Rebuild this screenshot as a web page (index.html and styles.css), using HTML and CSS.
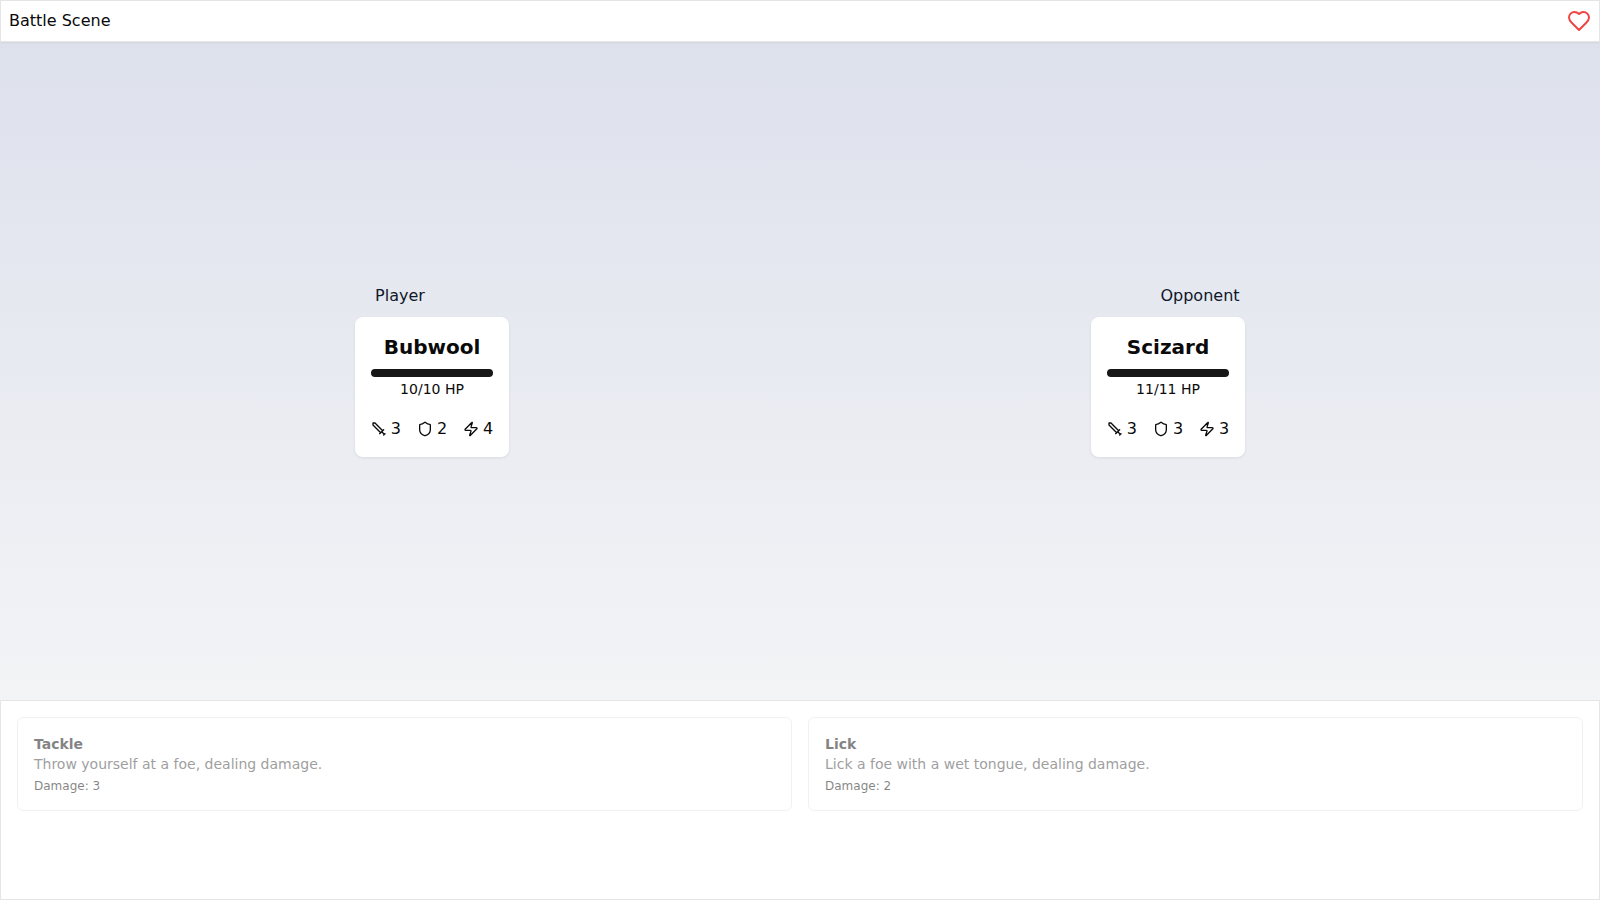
FILE: index.html
```html
<!DOCTYPE html>
<html lang="en">
<head>
<meta charset="utf-8">
<title>Battle Scene</title>
<link rel="stylesheet" href="styles.css">
</head>
<body>
<svg class="sprite" aria-hidden="true">
  <symbol id="sword" viewBox="0 0 24 24"><path d="M14.5 17.5 3 6V3h3l11.5 11.5M13 19l6-6M16 16l4 4M19 21l2-2"/></symbol>
  <symbol id="shield" viewBox="0 0 24 24"><path d="M20 13c0 5-3.5 7.5-7.66 8.95a1 1 0 0 1-.67-.01C7.5 20.5 4 18 4 13V6a1 1 0 0 1 1-1c2 0 4.5-1.2 6.24-2.72a1.17 1.17 0 0 1 1.52 0C14.51 3.81 17 5 19 5a1 1 0 0 1 1 1z"/></symbol>
  <symbol id="zap" viewBox="0 0 24 24"><path d="M4 14a1 1 0 0 1-.78-1.63l9.9-10.2a.5.5 0 0 1 .86.46l-1.92 6.02A1 1 0 0 0 13 10h7a1 1 0 0 1 .78 1.63l-9.9 10.2a.5.5 0 0 1-.86-.46l1.92-6.02A1 1 0 0 0 11 14z"/></symbol>
  <symbol id="heart" viewBox="0 0 24 24"><path d="M19 14c1.49-1.46 3-3.21 3-5.5A5.5 5.5 0 0 0 16.5 3c-1.76 0-3 .5-4.5 2-1.5-1.5-2.74-2-4.5-2A5.5 5.5 0 0 0 2 8.5c0 2.3 1.5 4.05 3 5.5l7 7Z"/></symbol>
</svg>
<div class="app">
  <header class="topbar">
    <span>Battle Scene</span>
    <svg class="heart" aria-hidden="true"><use href="#heart"/></svg>
  </header>
  <main class="arena">
    <div class="labels">
      <span>Player</span>
      <span>Opponent</span>
    </div>
    <div class="fighters">
      <section class="card">
        <h2 class="name">Bubwool</h2>
        <div class="bar" role="progressbar" aria-label="HP" aria-valuenow="10" aria-valuemin="0" aria-valuemax="10"><div class="fill" style="width:100%"></div></div>
        <div class="hp">10/10 HP</div>
        <div class="stats">
          <span class="stat"><svg class="icon"><use href="#sword"/></svg>3</span>
          <span class="stat"><svg class="icon"><use href="#shield"/></svg>2</span>
          <span class="stat"><svg class="icon"><use href="#zap"/></svg>4</span>
        </div>
      </section>
      <section class="card">
        <h2 class="name">Scizard</h2>
        <div class="bar" role="progressbar" aria-label="HP" aria-valuenow="11" aria-valuemin="0" aria-valuemax="11"><div class="fill" style="width:100%"></div></div>
        <div class="hp">11/11 HP</div>
        <div class="stats">
          <span class="stat"><svg class="icon"><use href="#sword"/></svg>3</span>
          <span class="stat"><svg class="icon"><use href="#shield"/></svg>3</span>
          <span class="stat"><svg class="icon"><use href="#zap"/></svg>3</span>
        </div>
      </section>
    </div>
  </main>
  <footer class="moves">
    <button class="move" disabled>
      <span class="move-name">Tackle</span>
      <span class="move-text">Throw yourself at a foe, dealing damage.</span>
      <span class="move-damage">Damage: 3</span>
    </button>
    <button class="move" disabled>
      <span class="move-name">Lick</span>
      <span class="move-text">Lick a foe with a wet tongue, dealing damage.</span>
      <span class="move-damage">Damage: 2</span>
    </button>
  </footer>
</div>
</body>
</html>
```
FILE: styles.css
```css
* {
  box-sizing: border-box;
}

body {
  margin: 0;
  font: 16px/24px "DejaVu Sans", sans-serif;
  color: #0a0a0a;
}

.sprite {
  display: none;
}

.app {
  display: flex;
  flex-direction: column;
  min-height: 100vh;
}

.topbar {
  position: relative;
  display: flex;
  align-items: center;
  justify-content: space-between;
  padding: 8px;
  background: #fff;
  border: 1px solid #e5e5e5;
  box-shadow: 0 1px 2px rgba(0, 0, 0, 0.05);
}

.heart,
.icon {
  fill: none;
  stroke: currentColor;
  stroke-width: 2;
  stroke-linecap: round;
  stroke-linejoin: round;
}

.heart {
  width: 24px;
  height: 24px;
  color: #ef4444;
}

.arena {
  flex: 1;
  display: flex;
  flex-direction: column;
  justify-content: center;
  gap: 9px;
  padding-bottom: 1px;
  background: linear-gradient(to bottom, #dde1ec, #f3f4f6);
}

.labels,
.fighters {
  display: grid;
  grid-template-columns: 1fr 1fr;
  justify-items: center;
}

.labels {
  color: #0f172a;
}

.fighters {
  padding: 0 64px;
}

.card {
  padding: 16px;
  background: #fff;
  border-radius: 8px;
  box-shadow: 0 1px 3px rgba(0, 0, 0, 0.08);
  text-align: center;
}

.name {
  margin: 0 0 8px;
  font-size: 20px;
  line-height: 28px;
  font-weight: 700;
}

.bar {
  height: 8px;
  overflow: hidden;
  border-radius: 4px;
  background: #e5e5e5;
}

.fill {
  height: 100%;
  background: #171717;
}

.hp {
  font-size: 14px;
}

.stats {
  display: flex;
  gap: 16px;
  margin-top: 16px;
}

.stat {
  display: flex;
  align-items: center;
  gap: 4px;
}

.icon {
  width: 16px;
  height: 16px;
}

.moves {
  display: grid;
  grid-template-columns: 1fr 1fr;
  align-items: start;
  gap: 16px;
  min-height: 200px;
  padding: 16px;
  background: #fff;
  border: 1px solid #e5e5e5;
}

.move {
  display: flex;
  flex-direction: column;
  padding: 16px;
  font: 14px/20px "DejaVu Sans", sans-serif;
  text-align: left;
  color: #0a0a0a;
  background: #fff;
  border: 1px solid #e5e5e5;
  border-radius: 6px;
}

.move:disabled {
  opacity: 0.5;
}

.move-name {
  font-weight: 700;
}

.move-text {
  color: #404040;
}

.move-damage {
  margin-top: 4px;
  font-size: 12px;
  line-height: 16px;
}
```
